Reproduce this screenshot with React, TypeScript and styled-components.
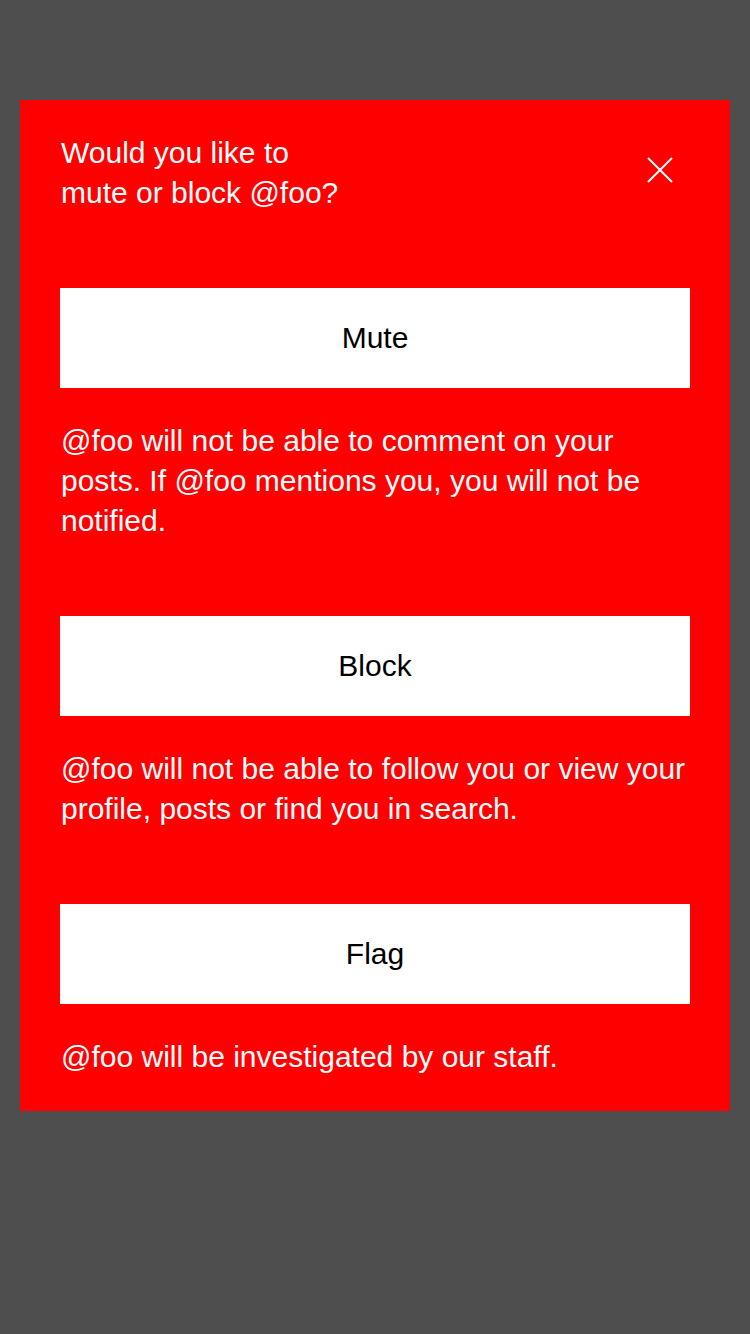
import React from "react";
import styled, { createGlobalStyle } from "styled-components";

const Global = createGlobalStyle`
  html, body { margin: 0; padding: 0; background: #4e4e4e; }
  body { font-family: "Liberation Sans", Arial, sans-serif; }
`;

const Page = styled.div`
  width: 750px;
  min-height: 1334px;
  background: #4e4e4e;
  padding: 100px 20px 0;
  box-sizing: border-box;
`;

const Modal = styled.div`
  background: #ff0000;
  padding: 33px 40px 34px;
  display: flex;
  flex-direction: column;
  color: #fff;
`;

const Header = styled.div`
  display: flex;
  justify-content: space-between;
  align-items: flex-start;
  margin-bottom: 75px;
`;

const Title = styled.h1`
  margin: 0;
  padding-left: 1px;
  font-size: 30px;
  font-weight: 400;
  line-height: 40px;
`;

const Close = styled.button`
  width: 44px;
  height: 44px;
  margin: 15px 8px 0 0;
  padding: 0;
  border: none;
  background: transparent;
  display: flex;
  align-items: center;
  justify-content: center;
  cursor: pointer;
`;

const Section = styled.div<{ $last?: boolean }>`
  display: flex;
  flex-direction: column;
  gap: 33px;
  margin-bottom: ${(p) => (p.$last ? 0 : 75)}px;
`;

const ActionButton = styled.button`
  height: 100px;
  width: 100%;
  border: none;
  background: #fff;
  color: #000;
  font-family: inherit;
  font-size: 30px;
  cursor: pointer;
`;

const Desc = styled.p`
  margin: 0;
  padding-left: 1px;
  font-size: 30px;
  line-height: 40px;
`;

const actions = [
  {
    label: "Mute",
    desc: "@foo will not be able to comment on your posts. If @foo mentions you, you will not be notified.",
  },
  {
    label: "Block",
    desc: "@foo will not be able to follow you or view your profile, posts or find you in search.",
  },
  { label: "Flag", desc: "@foo will be investigated by our staff." },
];

export default function App() {
  return (
    <>
      <Global />
      <Page>
        <Modal>
          <Header>
            <Title>
              Would you like to
              <br />
              mute or block @foo?
            </Title>
            <Close aria-label="Close">
              <svg width="26" height="26" viewBox="0 0 26 26">
                <path d="M1 1 L25 25 M25 1 L1 25" stroke="#fff" strokeWidth="2" />
              </svg>
            </Close>
          </Header>
          {actions.map((a, i) => (
            <Section key={a.label} $last={i === actions.length - 1}>
              <ActionButton>{a.label}</ActionButton>
              <Desc>{a.desc}</Desc>
            </Section>
          ))}
        </Modal>
      </Page>
    </>
  );
}
